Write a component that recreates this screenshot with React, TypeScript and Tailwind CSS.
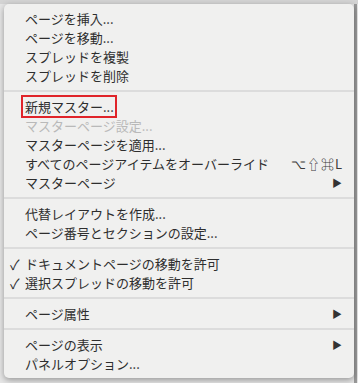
import React from "react";

type Item =
  | { kind: "sep" }
  | {
      kind: "item";
      label: string;
      disabled?: boolean;
      checked?: boolean;
      shortcut?: string;
      submenu?: boolean;
      highlight?: boolean;
    };

const items: Item[] = [
  { kind: "item", label: "ページを挿入..." },
  { kind: "item", label: "ページを移動..." },
  { kind: "item", label: "スプレッドを複製" },
  { kind: "item", label: "スプレッドを削除" },
  { kind: "sep" },
  { kind: "item", label: "新規マスター...", highlight: true },
  { kind: "item", label: "マスターページ設定...", disabled: true },
  { kind: "item", label: "マスターページを適用..." },
  { kind: "item", label: "すべてのページアイテムをオーバーライド", shortcut: "⌥⇧⌘L" },
  { kind: "item", label: "マスターページ", submenu: true },
  { kind: "sep" },
  { kind: "item", label: "代替レイアウトを作成..." },
  { kind: "item", label: "ページ番号とセクションの設定..." },
  { kind: "sep" },
  { kind: "item", label: "ドキュメントページの移動を許可", checked: true },
  { kind: "item", label: "選択スプレッドの移動を許可", checked: true },
  { kind: "sep" },
  { kind: "item", label: "ページ属性", submenu: true },
  { kind: "sep" },
  { kind: "item", label: "ページの表示", submenu: true },
  { kind: "item", label: "パネルオプション..." },
];

function Row({ item }: { item: Item }) {
  if (item.kind === "sep") {
    return (
      <div className="h-[12px] flex items-center">
        <div className="h-[2px] w-full bg-[#dcdcdc]" />
      </div>
    );
  }
  return (
    <div
      className={
        "h-[19px] flex items-center pr-[11px] " +
        (item.disabled ? "text-[#b9b9b9]" : "text-[#2e2e2e]")
      }
    >
      <span className="w-[21px] pl-[6px] text-[14px] leading-none">{item.checked ? "✓" : ""}</span>
      {item.highlight ? (
        <span className="relative">
          {item.label}
          <span className="absolute -left-[4px] -right-[3px] -top-[2px] -bottom-[2px] border-2 border-[#e0242a]" />
        </span>
      ) : (
        <span>{item.label}</span>
      )}
      <span className="flex-1" />
      {item.shortcut && <span className="text-[13px] tracking-[1px] text-[#3a3a3a]">{item.shortcut}</span>}
      {item.submenu && <span className="text-[10px] text-[#333] pr-[1px]">▶</span>}
    </div>
  );
}

export default function App() {
  return (
    <div className="w-[358px] h-[383px] bg-[#e6e6e6] relative overflow-hidden">
      <div className="h-[4px] bg-[#d4d4d4]" />
      <div className="absolute right-[1px] top-[4px] bottom-0 w-[3px] bg-[#9a9a9a]" />
      <div
        className="absolute left-[4px] top-[4px] w-[350px] rounded-[5px] bg-[#f0f0ef] shadow-[0_2px_6px_rgba(0,0,0,0.35)] pt-[5px] pb-[5px] text-[13px]"
        style={{ fontFamily: '"Noto Sans CJK JP", "Noto Sans", sans-serif' }}
      >
        {items.map((it, i) => (
          <Row key={i} item={it} />
        ))}
      </div>
    </div>
  );
}
